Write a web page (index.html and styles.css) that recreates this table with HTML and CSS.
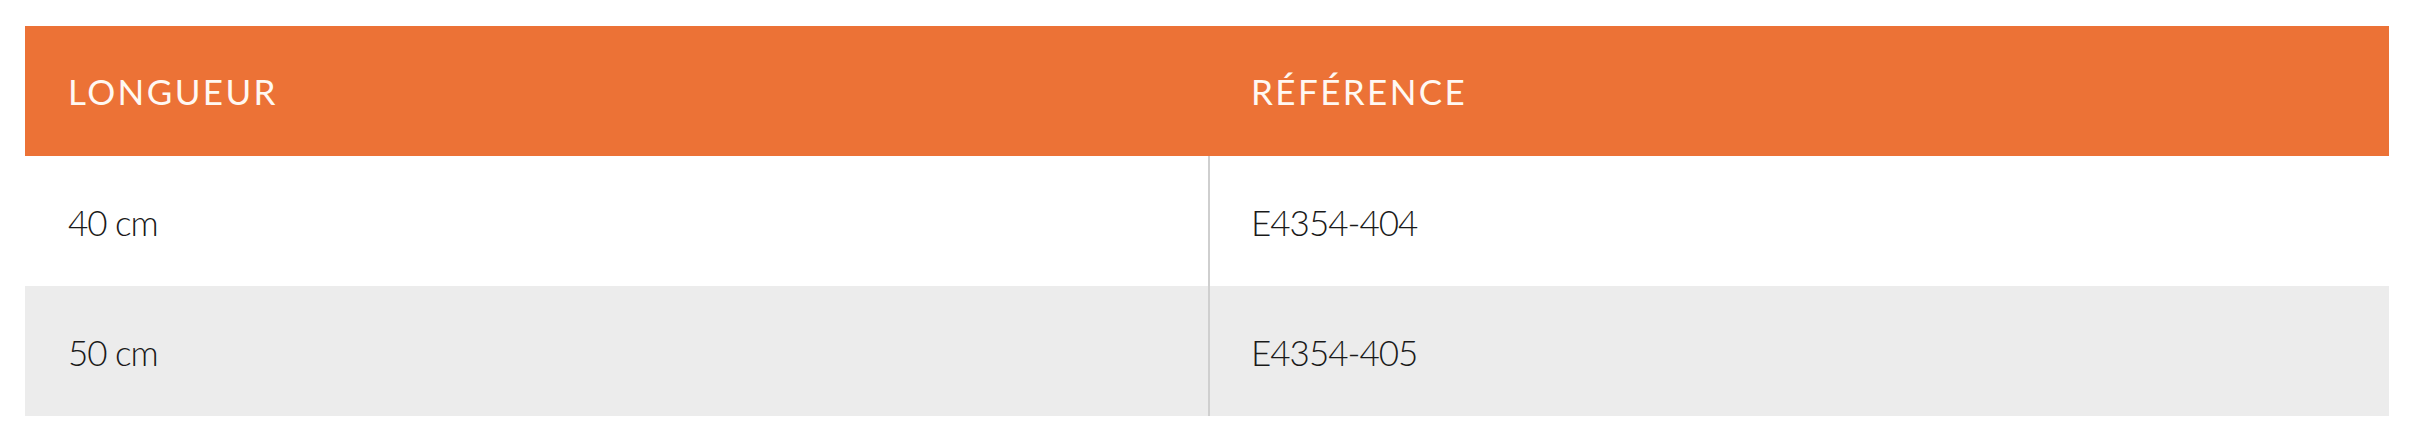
FILE: index.html
```html
<!DOCTYPE html>
<html lang="fr">
<head>
<meta charset="utf-8">
<link rel="stylesheet" href="styles.css">
</head>
<body>
<div class="table">
  <div class="row head">
    <div class="cell">LONGUEUR</div>
    <div class="cell">RÉFÉRENCE</div>
  </div>
  <div class="row">
    <div class="cell">40 cm</div>
    <div class="cell sep">E4354-404</div>
  </div>
  <div class="row alt">
    <div class="cell">50 cm</div>
    <div class="cell sep">E4354-405</div>
  </div>
</div>
</body>
</html>
```
FILE: styles.css
```css
html, body {
  margin: 0;
  padding: 0;
  background: #ffffff;
}
body {
  padding: 26px 26px 0 25px;
  font-family: Lato, "Noto Sans", sans-serif;
}
.table {
  display: flex;
  flex-direction: column;
  width: 2364px;
}
.row {
  display: grid;
  grid-template-columns: 1183px 1181px;
  height: 130px;
  background: #ffffff;
}
.row.alt {
  background: #ececec;
}
.row.head {
  background: #ec7236;
  color: #fff8f2;
}
.cell {
  display: flex;
  align-items: center;
  padding-left: 43px;
  padding-top: 2px;
  font-size: 35px;
  font-weight: 300;
  color: #1a1a1a;
  letter-spacing: -1px;
}
.head .cell {
  color: #fff8f2;
  font-weight: 400;
  font-size: 35px;
  letter-spacing: 2.4px;
  padding-top: 0;
}
.cell.sep {
  border-left: 2px solid #cfcfcf;
  padding-left: 41px;
}
```
